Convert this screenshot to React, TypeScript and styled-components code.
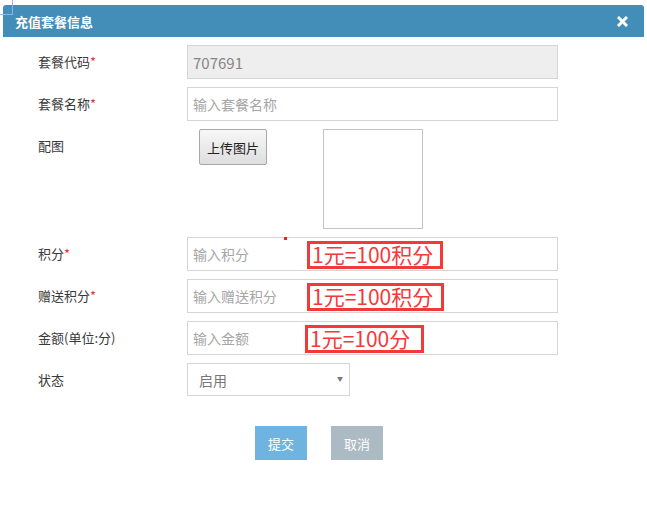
import React from "react";
import styled, { createGlobalStyle } from "styled-components";

const GlobalStyle = createGlobalStyle`
  body {
    margin: 0;
    background: #fff;
    font-family: "Noto Sans CJK SC", "Noto Sans", sans-serif;
  }
`;

interface FieldRow {
  label: string;
  required?: boolean;
  placeholder: string;
  note?: string;
  noteLeft?: number;
  noteWidth?: number;
}

const pointRows: FieldRow[] = [
  { label: "积分", required: true, placeholder: "输入积分", note: "1元=100积分", noteLeft: 120, noteWidth: 136 },
  { label: "赠送积分", required: true, placeholder: "输入赠送积分", note: "1元=100积分", noteLeft: 120, noteWidth: 137 },
  { label: "金额(单位:分)", placeholder: "输入金额", note: "1元=100分", noteLeft: 118, noteWidth: 119 },
];

const CloseIcon: React.FC = () => (
  <svg width="11" height="11" viewBox="0 0 11 11">
    <path d="M2 2 L9 9 M9 2 L2 9" stroke="#fff" strokeWidth="3" strokeLinecap="square" />
  </svg>
);

const App: React.FC = () => {
  return (
    <Page>
      <GlobalStyle />
      <FocusMark />
      <Dialog>
        <Header>
          <Title>充值套餐信息</Title>
          <CloseBtn type="button">
            <CloseIcon />
          </CloseBtn>
        </Header>
        <Form>
          <Row>
            <Label>
              套餐代码<Star>*</Star>
            </Label>
            <TextInput $disabled readOnly value="707691" />
          </Row>
          <Row>
            <Label>
              套餐名称<Star>*</Star>
            </Label>
            <TextInput placeholder="输入套餐名称" />
          </Row>
          <Row>
            <Label>配图</Label>
            <UploadArea>
              <UploadBtn type="button">上传图片</UploadBtn>
              <Preview />
            </UploadArea>
          </Row>
          {pointRows.map((row, i) => (
            <Row key={row.label}>
              <Label>
                {row.label}
                {row.required && <Star>*</Star>}
              </Label>
              <InputWrap>
                {i === 0 && <CaretDot />}
                <TextInput placeholder={row.placeholder} />
                <Note style={{ left: row.noteLeft, width: row.noteWidth }}>{row.note}</Note>
              </InputWrap>
            </Row>
          ))}
          <Row>
            <Label>状态</Label>
            <SelectBox>
              <span>启用</span>
              <Arrow>▼</Arrow>
            </SelectBox>
          </Row>
        </Form>
        <Footer>
          <ActionBtn type="button" $tone="primary">
            提交
          </ActionBtn>
          <ActionBtn type="button" $tone="muted">
            取消
          </ActionBtn>
        </Footer>
      </Dialog>
    </Page>
  );
};

export default App;

const Page = styled.div`
  position: relative;
  width: 647px;
  height: 508px;
  padding: 5px 3px 0;
  box-sizing: border-box;
  overflow: hidden;
`;

const FocusMark = styled.div`
  position: absolute;
  left: 0;
  top: 0;
  width: 12px;
  height: 14px;
  border-right: 1px solid #8db4ee;
  border-bottom: 1px solid #8db4ee;
  z-index: 2;
`;

const Dialog = styled.div`
  width: 641px;
  display: flex;
  flex-direction: column;
`;

const Header = styled.div`
  height: 32px;
  background: #438eb9;
  border-radius: 3px 3px 0 0;
  display: flex;
  align-items: center;
  justify-content: space-between;
  padding: 0 16px 0 12px;
`;

const Title = styled.span`
  color: #fff;
  font-size: 13px;
  font-weight: bold;
`;

const CloseBtn = styled.button`
  border: 0;
  background: none;
  padding: 0;
  display: flex;
  cursor: pointer;
`;

const Form = styled.div`
  display: flex;
  flex-direction: column;
  gap: 8px;
  padding: 8px 0 0 35px;
`;

const Row = styled.div`
  display: grid;
  grid-template-columns: 149px auto;
  align-items: start;
`;

const Label = styled.label`
  font-size: 13px;
  color: #393939;
  line-height: 34px;
`;

const Star = styled.span`
  color: #e03c3c;
`;

const TextInput = styled.input<{ $disabled?: boolean }>`
  width: 371px;
  height: 34px;
  box-sizing: border-box;
  border: 1px solid #d5d5d5;
  background: ${(p) => (p.$disabled ? "#eeeeee" : "#fff")};
  color: #858585;
  font-family: "Noto Sans CJK SC", "Noto Sans", sans-serif;
  font-size: ${(p) => (p.$disabled ? "15px" : "14px")};
  padding: 0 5px;
  outline: none;

  &::placeholder {
    color: #a6a6a6;
  }
`;

const UploadArea = styled.div`
  display: flex;
  align-items: flex-start;
  padding-left: 12px;
  gap: 56px;
`;

const UploadBtn = styled.button`
  width: 68px;
  height: 36px;
  border: 1px solid #a8a8a8;
  border-radius: 2px;
  background: linear-gradient(#f7f7f7, #dedede);
  font-family: "Noto Sans CJK SC", "Noto Sans", sans-serif;
  font-size: 13px;
  color: #222;
  padding: 0;
`;

const Preview = styled.div`
  width: 100px;
  height: 100px;
  box-sizing: border-box;
  border: 1px solid #c4c4c4;
`;

const InputWrap = styled.div`
  position: relative;
  width: 371px;
`;

const CaretDot = styled.span`
  position: absolute;
  left: 97px;
  top: 0;
  width: 3px;
  height: 3px;
  background: #ff1a1a;
`;

const Note = styled.div`
  position: absolute;
  top: 4px;
  height: 28px;
  box-sizing: border-box;
  border: 3px solid #f23a3a;
  color: #f23a3a;
  font-family: "Noto Sans CJK SC", "Noto Sans", sans-serif;
  font-size: 21px;
  line-height: 21px;
  padding-left: 2px;
  white-space: nowrap;
`;

const SelectBox = styled.div`
  width: 163px;
  height: 33px;
  box-sizing: border-box;
  border: 1px solid #d5d5d5;
  display: flex;
  align-items: center;
  justify-content: space-between;
  padding: 0 6px 0 11px;
  font-size: 14px;
  color: #777;
`;

const Arrow = styled.span`
  font-size: 6px;
  color: #777;
  margin-top: -3px;
`;

const Footer = styled.div`
  display: flex;
  justify-content: center;
  gap: 24px;
  padding: 29px 9px 0 0;
`;

const ActionBtn = styled.button<{ $tone: "primary" | "muted" }>`
  width: 52px;
  height: 34px;
  border: 0;
  padding: 0;
  color: #fff;
  font-family: "Noto Sans CJK SC", "Noto Sans", sans-serif;
  font-size: 13px;
  background: ${(p) => (p.$tone === "primary" ? "#6fb3e0" : "#abbac3")};
`;
